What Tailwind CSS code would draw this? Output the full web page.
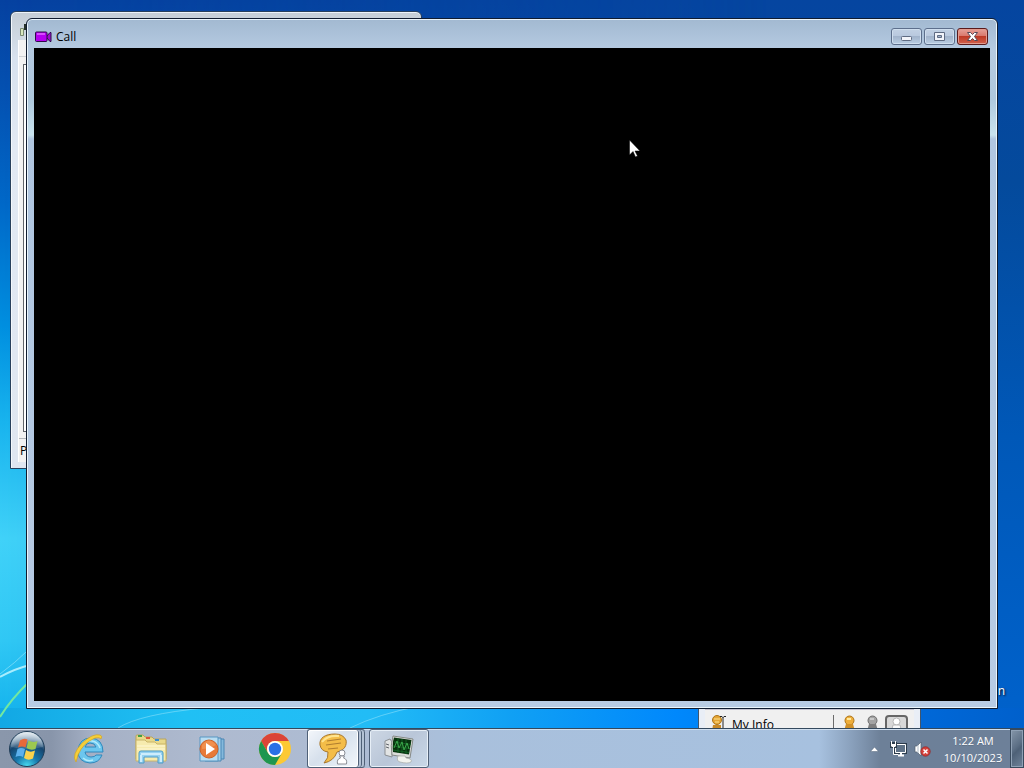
<!DOCTYPE html>
<html lang="en">

<head>
    <meta charset="UTF-8">
    <meta name="viewport" content="width=device-width, initial-scale=1">
    <title>Call</title>
    <script src="https://cdn.jsdelivr.net/npm/@tailwindcss/browser@4"></script>
</head>

<body class="h-screen flex flex-col overflow-hidden bg-[#0052a8] font-['Open_Sans','Noto_Sans',sans-serif] text-xs text-black">
    <!-- Desktop -->
    <main class="relative flex-1 min-h-0 overflow-hidden bg-[linear-gradient(180deg,#0545a0_0%,#044a9c_25%,#0058b8_60%,#0062cc_100%)]">
        <div class="absolute inset-y-0 left-0 w-3/4 bg-[linear-gradient(180deg,#0541a0_0%,#0450b0_12%,#0068c8_28%,#0090e0_45%,#18b4ee_58%,#40d2f8_74%,#30c8f4_88%,#10b0ec_100%)] mask-r-from-0% mask-r-to-100%"></div>
        <div class="absolute bottom-0 inset-x-0 h-5 bg-[linear-gradient(90deg,#12a8e4_0%,#20c0f4_18%,#22bcf6_36%,#10a0f4_50%,#0088fc_66%,#0068d8_90%,#0060cc_100%)]"></div>
        <svg class="absolute bottom-0 left-0" width="540" height="80" viewBox="0 0 540 80" fill="none">
            <path d="M0 29 Q14 21 30 17" stroke="#c0f4ff" stroke-width="2" opacity=".85" />
            <path d="M0 26 Q16 14 26 4" stroke="#9be8fc" opacity=".6" />
            <path d="M0 69 Q11 51 30 33" stroke="#72e8a0" stroke-width="2" />
            <path d="M118 80 Q140 66 205 60M350 80 Q378 66 420 58" stroke="#a0e8fc" opacity=".5" />
        </svg>
        <span class="absolute bottom-[29px] right-[19px] text-white [text-shadow:1px_1px_2px_#000]">n</span>

        <!-- Buddy list window -->
        <section class="absolute top-[11px] left-[10px] w-[412px] h-[458px] rounded-t-md border border-[#28405c] bg-[linear-gradient(180deg,#c5ced6_0%,#d8e2ee_10%,#e2e9f3_30%,#dfe6f0_100%)] shadow-[inset_0_1px_0_#eef4fa,inset_1px_0_0_#f4f8fc] px-[7px] pt-2 pb-[6px] flex flex-col">
            <div class="h-5 flex items-center">
                <svg width="10" height="14" viewBox="0 0 10 14">
                    <path d="M2.500 5.500h3v7h-3z" fill="#d8e8c0" stroke="#7a8a72" />
                    <path d="M6 1h4v6H6z" fill="#26302a" />
                </svg>
            </div>
            <div class="flex-1 bg-[#f2f2f2] border-l border-white pt-4 flex flex-col">
                <div class="border-t border-[#cfd2d6] h-2"></div>
                <div class="ml-1 flex-1 bg-white border border-[#60646a]"></div>
                <div class="mt-[6px] h-6 border-t border-[#b4b8bc] pl-[1px] leading-6">People</div>
            </div>
        </section>

        <!-- My Info window -->
        <section class="absolute -bottom-20 right-[103px] w-[223px] h-[120px] border border-[#42566c] bg-[#e9eef6] px-[6px] pt-5 flex">
            <div class="flex-1 h-20 bg-[#f0f0f0] border-t border-[#c6c4d0] px-[6px] flex items-start pt-[5px]">
                <svg width="18" height="16" viewBox="0 0 18 16">
                    <circle cx="6" cy="5" r="4.500" fill="#e5a536" stroke="#ad7418" />
                    <path d="M2 10h8v6H1z" fill="#c98a28" />
                    <path d="M3 4h6M4 7h4" stroke="#fce28c" />
                    <path d="M9 1.500h2l1 1 1-1h2M12 2v14" fill="none" stroke="#252525" />
                </svg>
                <span class="ml-[3px] leading-5">My Info</span>
                <span class="ml-auto h-5 border-l border-[#6b6b6b]"></span>
                <svg class="ml-[9px]" width="13" height="16" viewBox="0 0 13 16">
                    <circle cx="6.500" cy="5.500" r="4.500" fill="#eeae3c" stroke="#ad7418" />
                    <path d="M3 9h7l2 7H1z" fill="#d09028" />
                    <path d="M4 4h4" stroke="#ffe99c" stroke-width="2" />
                </svg>
                <svg class="ml-[10px]" width="13" height="16" viewBox="0 0 13 16">
                    <circle cx="6.500" cy="5.500" r="4.500" fill="#a3a3a3" stroke="#6c6c6c" />
                    <path d="M3 9h7l2 7H1z" fill="#7e7e7e" />
                    <path d="M4 4h4" stroke="#c8c8c8" stroke-width="2" />
                </svg>
                <span class="ml-[6px] w-[23px] h-7 rounded-sm border-2 border-[#666] bg-[#d8d8d8] flex justify-center">
                    <svg width="13" height="16" viewBox="0 0 13 16">
                        <circle cx="6.500" cy="4.500" r="3.500" fill="#fff" stroke="#b6b6b6" />
                        <path d="M3 8h7l2 8H1z" fill="#fafafa" stroke="#b6b6b6" />
                    </svg>
                </span>
            </div>
        </section>

        <!-- Call window -->
        <section class="absolute top-[18px] bottom-[19px] left-[26px] right-[26px] rounded-t-md border border-[#101c30] bg-[linear-gradient(180deg,#a2b9d1_0px,#b5cae1_30px,#aec8dd_80px,#c9e3ee_116px,#b0c6e0_120px,#b8cce4_100%)] shadow-[inset_0_0_0_1px_#eaf5fc] px-[7px] pb-[7px] flex flex-col">
            <header class="h-[29px] flex items-center justify-between pl-[1px] pr-[2px]">
                <h1 class="flex items-center gap-1 pt-[6px]">
                    <svg width="17" height="12" viewBox="0 0 17 12">
                        <path d="M11 6l4-4.500h1v9h-1L11 6z" fill="#9a10c8" stroke="#2c0a48" />
                        <rect x=".5" y="1" width="11.500" height="9.500" rx="1" fill="#b400ee" stroke="#2c0a48" />
                        <path d="M2 3h8" stroke="#d84cff" stroke-width="2" />
                    </svg>
                    <span class="leading-4">Call</span>
                </h1>
                <div class="flex gap-[2px] pt-[6px]">
                    <button aria-label="Minimize" class="w-[31px] h-[17px] rounded-[3px] border border-[#5d6f8c] bg-[linear-gradient(180deg,#c2d1e4_0%,#b8c8de_48%,#a2b4cc_50%,#b9cde2_100%)] shadow-[inset_0_0_0_1px_#cfdeee] flex items-center justify-center">
                        <svg width="13" height="11" viewBox="0 0 13 11">
                            <rect x="1.500" y="5.500" width="10" height="4" rx="1" fill="#f2f4fa" stroke="#5f6b82" />
                        </svg>
                    </button>
                    <button aria-label="Maximize" class="w-[31px] h-[17px] rounded-[3px] border border-[#5d6f8c] bg-[linear-gradient(180deg,#c2d1e4_0%,#b8c8de_48%,#a2b4cc_50%,#b9cde2_100%)] shadow-[inset_0_0_0_1px_#cfdeee] flex items-center justify-center">
                        <svg width="13" height="11" viewBox="0 0 13 11">
                            <path fill-rule="evenodd" d="M1.500 1.500h10v8h-10zM4.500 4.500v2h4v-2z" fill="#f2f4fa" stroke="#5f6b82" />
                        </svg>
                    </button>
                    <button aria-label="Close" class="w-[31px] h-[17px] rounded-[3px] border border-[#5a1a1c] bg-[linear-gradient(180deg,#e6a199_0%,#d9776b_48%,#be3a26_50%,#d2614c_100%)] shadow-[inset_0_0_0_1px_#e29a8e] flex items-center justify-center">
                        <svg width="13" height="11" viewBox="0 0 13 11">
                            <path d="M1.500 1.500h3l2 2 2-2h3L8.500 5.500l3 4h-3l-2-2-2 2h-3l3-4z" fill="#fff" stroke="#564a58" stroke-linejoin="round" />
                        </svg>
                    </button>
                </div>
            </header>
            <div class="flex-1 bg-black"></div>
        </section>

        <!-- Mouse pointer -->
        <svg class="absolute top-[139px] left-[629px]" width="12" height="19" viewBox="0 0 12 19">
            <path d="M.5 1v15l3.500-3.500 2.500 5.500 2-1-2.500-5h5z" fill="#fff" stroke="#000" stroke-width=".5" />
        </svg>
    </main>

    <!-- Taskbar -->
    <footer class="relative h-10 shrink-0 flex items-stretch border-t border-[#34495e] bg-[linear-gradient(90deg,#8a97ab_0%,#8895aa_5%,#a5b0c5_9%,#aebacf_20%,#adbcd4_36%,#a9c0dc_45%,#a7c1df_80%,#8ba2be_83%,#6d8098_86%,#6d8099_100%)] shadow-[inset_0_1px_0_#d0dfef]">
        <button aria-label="Start" class="w-[54px] flex items-center justify-center">
            <svg width="38" height="38" viewBox="0 0 38 38">
                <defs>
                    <radialGradient id="orb" cx=".5" cy="1" r=".95">
                        <stop offset="0" stop-color="#4ae0f4" />
                        <stop offset=".35" stop-color="#1878ac" />
                        <stop offset=".7" stop-color="#16456e" />
                        <stop offset="1" stop-color="#a4bdd0" />
                    </radialGradient>
                    <linearGradient id="gloss" x2="0" y2="1">
                        <stop stop-color="#fff" stop-opacity=".7" />
                        <stop offset="1" stop-color="#fff" stop-opacity=".1" />
                    </linearGradient>
                </defs>
                <circle cx="19" cy="19" r="17.500" fill="url(#orb)" stroke="#213e58" />
                <path d="M3 17a16 15 0 0 1 32 0Q19 21 3 17z" fill="url(#gloss)" />
                <path d="M12 10.500Q16 7.500 19.500 9.500L17.500 17.500Q14 15.500 10 17.500z" fill="#e8693a" />
                <path d="M20.500 10.500Q25 13 29.500 11L27.500 19Q23 21 18.500 18z" fill="#9cc850" />
                <path d="M9.500 19Q13 17 17 19L15 27Q11.500 25 7.500 27z" fill="#5cb0ec" />
                <path d="M18 20Q22.500 23 27 20.500L25 28.500Q20.500 31 16 28z" fill="#fbd24c" />
            </svg>
        </button>
        <nav class="flex items-stretch">
            <button aria-label="Internet Explorer" class="w-[70px] flex items-center justify-center">
                <svg width="34" height="34" viewBox="0 0 34 34">
                    <path d="M31 20H13q1 5 6 5 4 0 5-2h6q-3 8-12 8Q6 30 6 19 7 6 19 6q12 1 12 14zM13 15h11q-1-4-6-4-4 0-5 4z" fill="#6cc6ee" stroke="#2e88bc" stroke-linejoin="round" />
                    <path d="M9 14q4-6 11-5 6 1 8 7M11 26q4 4 10 2" fill="none" stroke="#b2eafa" stroke-width="1.500" />
                    <path d="M4 30Q-1 23 10 11 21 1 28 3q3 1 1 4-1-2-6-1Q11 11 6 23q-1 4-2 7z" fill="#f6cf38" stroke="#cfa02a" stroke-width=".7" />
                </svg>
            </button>
            <button aria-label="Windows Explorer" class="w-[54px] flex items-center justify-center">
                <svg width="34" height="34" viewBox="0 0 34 34">
                    <path d="M2 6V4q0-1 1-1h6l2 2h7l2 2h12v20H2z" fill="#e9d98a" stroke="#b9a45c" />
                    <path d="M4 3h4v2H4z" fill="#40a046" />
                    <path d="M12 5h4v2h-4z" fill="#dd5436" />
                    <path d="M21 7h4v2h-4z" fill="#3d8ed0" />
                    <path d="M2 8h9l2 2h8l2 2h9v17H2z" fill="#f6ebae" stroke="#c9b468" />
                    <path d="M3 14h28M3 17h28" stroke="#fff8d6" />
                    <path d="M5 31V21q0-2 2-2h20q2 0 2 2v10h-5v-6H10v6z" fill="#96d2f0" stroke="#4c9cc8" />
                    <path d="M7 22h20M7 23v7M27 23v7" stroke="#e0f6ff" stroke-width="1.500" />
                </svg>
            </button>
            <button aria-label="Windows Media Player" class="w-[67px] flex items-center justify-center">
                <svg width="34" height="34" viewBox="0 0 34 34">
                    <path d="M13 7h16v20H13z" fill="#84b9dc" stroke="#4a86b4" />
                    <path d="M10 6h16v23H10z" fill="#a2cfea" stroke="#4a86b4" />
                    <path d="M5 5h18v24H5z" fill="#b9ddf2" stroke="#5997c2" />
                    <circle cx="14" cy="17" r="9" fill="#e87a38" stroke="#cc6226" />
                    <path d="M7 13q7-9 14 0-7 4-14 4z" fill="#f49a58" opacity=".7" />
                    <path d="M11 11v12l9-6z" fill="#fff" />
                </svg>
            </button>
            <button aria-label="Google Chrome" class="w-[60px] flex items-center justify-center">
                <svg width="34" height="34" viewBox="0 0 34 34">
                    <circle cx="17" cy="17" r="16" fill="#fcc934" />
                    <path d="M3.140 9A16 16 0 0 1 30.860 9H17a8 8 0 0 0-6.930 12z" fill="#db4437" />
                    <path d="M3.140 9A16 16 0 0 0 17 33l6.930-12a8 8 0 0 1-13.860 0z" fill="#1e9650" />
                    <circle cx="17" cy="17" r="8" fill="#fff" />
                    <circle cx="17" cy="17" r="6.200" fill="#2a70e6" />
                </svg>
            </button>
            <button aria-label="Messenger" class="ml-[2px] w-[58px] flex rounded-[3px] border-y border-l border-[#4f6077] bg-[#b4c2d5]">
                <span class="w-[51px] h-full rounded-[3px] border-r border-[#4f6077] bg-[linear-gradient(135deg,#f4f7fb_0%,#d6e0ec_45%,#dce6f0_60%,#f3f7fb_100%)] shadow-[inset_0_0_0_1px_#fff] flex items-center justify-center">
                    <svg width="34" height="34" viewBox="0 0 34 34">
                        <path d="M19 2C9 2 3 6 4 13q1 6 8 7 1 6-4 11 10-2 13-11c8-2 10-7 9-12Q27 2 19 2z" fill="#f4bd48" stroke="#a8772c" />
                        <path d="M6 10q5-7 17-6" stroke="#ffe48f" stroke-width="2" fill="none" />
                        <path d="M11 9l14-2M10 13l15-2M12 17l10-1" stroke="#b07e30" stroke-width="1.200" />
                        <circle cx="26" cy="21" r="3" fill="#fff" stroke="#8a8d94" />
                        <path d="M23.500 24h5l-1 2q4 1 3 6h-9q-1-5 3-6z" fill="#fff" stroke="#8a8d94" />
                    </svg>
                </span>
                <span class="w-[3px] h-full rounded-r-[3px] border-r border-[#4f6077]"></span>
                <span class="w-[3px] h-full rounded-r-[3px] border-r border-[#4f6077]"></span>
            </button>
            <button aria-label="System monitor" class="ml-1 w-[60px] rounded-[3px] border border-[#4f6077] bg-[linear-gradient(135deg,#cdd7e4_0%,#b9c6d8_50%,#c9d8e8_100%)] shadow-[inset_0_0_0_1px_#e7eff7] flex items-center justify-center">
                <svg width="34" height="32" viewBox="0 0 34 32">
                    <path d="M3 8l5-2 2 3v15l-7-2z" fill="#e2e4e4" stroke="#8a8e92" />
                    <path d="M4 11l3 1M4 14l3 1" stroke="#5e6269" />
                    <path d="M11 3l20 3-3 19-18-3q-2-9 1-19z" fill="#dcdedb" stroke="#858986" />
                    <path d="M12 4.500l17.500 2.500L27 21.500 11 19q-1-8 1-14.500z" fill="#08320e" />
                    <path d="M12 9l17 2.500M11 13l17 2.500M11 17l16 2.500M16 5v15M20 6v14M24 7v14" stroke="#17692a" stroke-width=".8" />
                    <path d="M12 15l3-7 2 7 3-6 2 8 3-7 2 6" fill="none" stroke="#3aa84a" />
                    <path d="M16 23h7l1 2q7 1 5 4-3 2-11 0-4-1-2-6z" fill="#f2f3ee" stroke="#a8aba6" stroke-width=".7" />
                </svg>
            </button>
        </nav>

        <!-- Notification area -->
        <div class="ml-auto flex items-center text-white">
            <button aria-label="Show hidden icons" class="w-5 h-6 flex items-center justify-center">
                <svg width="9" height="6" viewBox="0 0 9 6">
                    <path d="M.5 5.500L4.500 1l4 4.500z" fill="#fff" stroke="#53657a" stroke-width=".5" />
                </svg>
            </button>
            <button aria-label="Network" class="ml-[6px] w-[18px]">
                <svg width="17" height="16" viewBox="0 0 17 16">
                    <path d="M5.500 3.500h10v8h-10z" fill="none" stroke="#2c3c4c" stroke-width="3" />
                    <path d="M5.500 3.500h10v8h-10z" fill="#5f7287" stroke="#fff" />
                    <path d="M8 14.500h6M11 12v2" stroke="#fff" stroke-width="2" />
                    <path d="M0 1h7v6H0z" fill="#2c3c4c" />
                    <path d="M1.500 0v3M5.500 0v3" stroke="#fff" />
                    <path d="M1 3h5v2L5 6H2L1 5z" fill="#fff" />
                    <path d="M3.500 6v7.500H8" fill="none" stroke="#fff" />
                </svg>
            </button>
            <button aria-label="Volume muted" class="ml-[6px] w-[18px]">
                <svg width="17" height="16" viewBox="0 0 17 16">
                    <path d="M1 5h2l4-4v14l-4-4H1z" fill="#fff" stroke="#52606f" stroke-width=".7" />
                    <path d="M4 4v8" stroke="#aeb9c4" />
                    <circle cx="11.500" cy="10.500" r="4.700" fill="#d5423c" stroke="#92201f" stroke-width=".7" />
                    <path d="M9.500 8.500l4 4M13.500 8.500l-4 4" stroke="#fff" stroke-width="1.500" />
                </svg>
            </button>
            <button class="ml-2 w-[66px] leading-[17px] text-center text-[11px] text-shadow-2xs">
                <time datetime="2023-10-10T01:22">1:22 AM<br>10/10/2023</time>
            </button>
            <button aria-label="Show desktop" class="ml-1 w-[14px] h-full border border-[#394a5d] bg-[linear-gradient(135deg,#8596a9_0%,#5c6f85_45%,#4e6177_55%,#70839a_100%)] shadow-[inset_0_0_0_1px_#8fa1b5]"></button>
        </div>
    </footer>
</body>

</html>
